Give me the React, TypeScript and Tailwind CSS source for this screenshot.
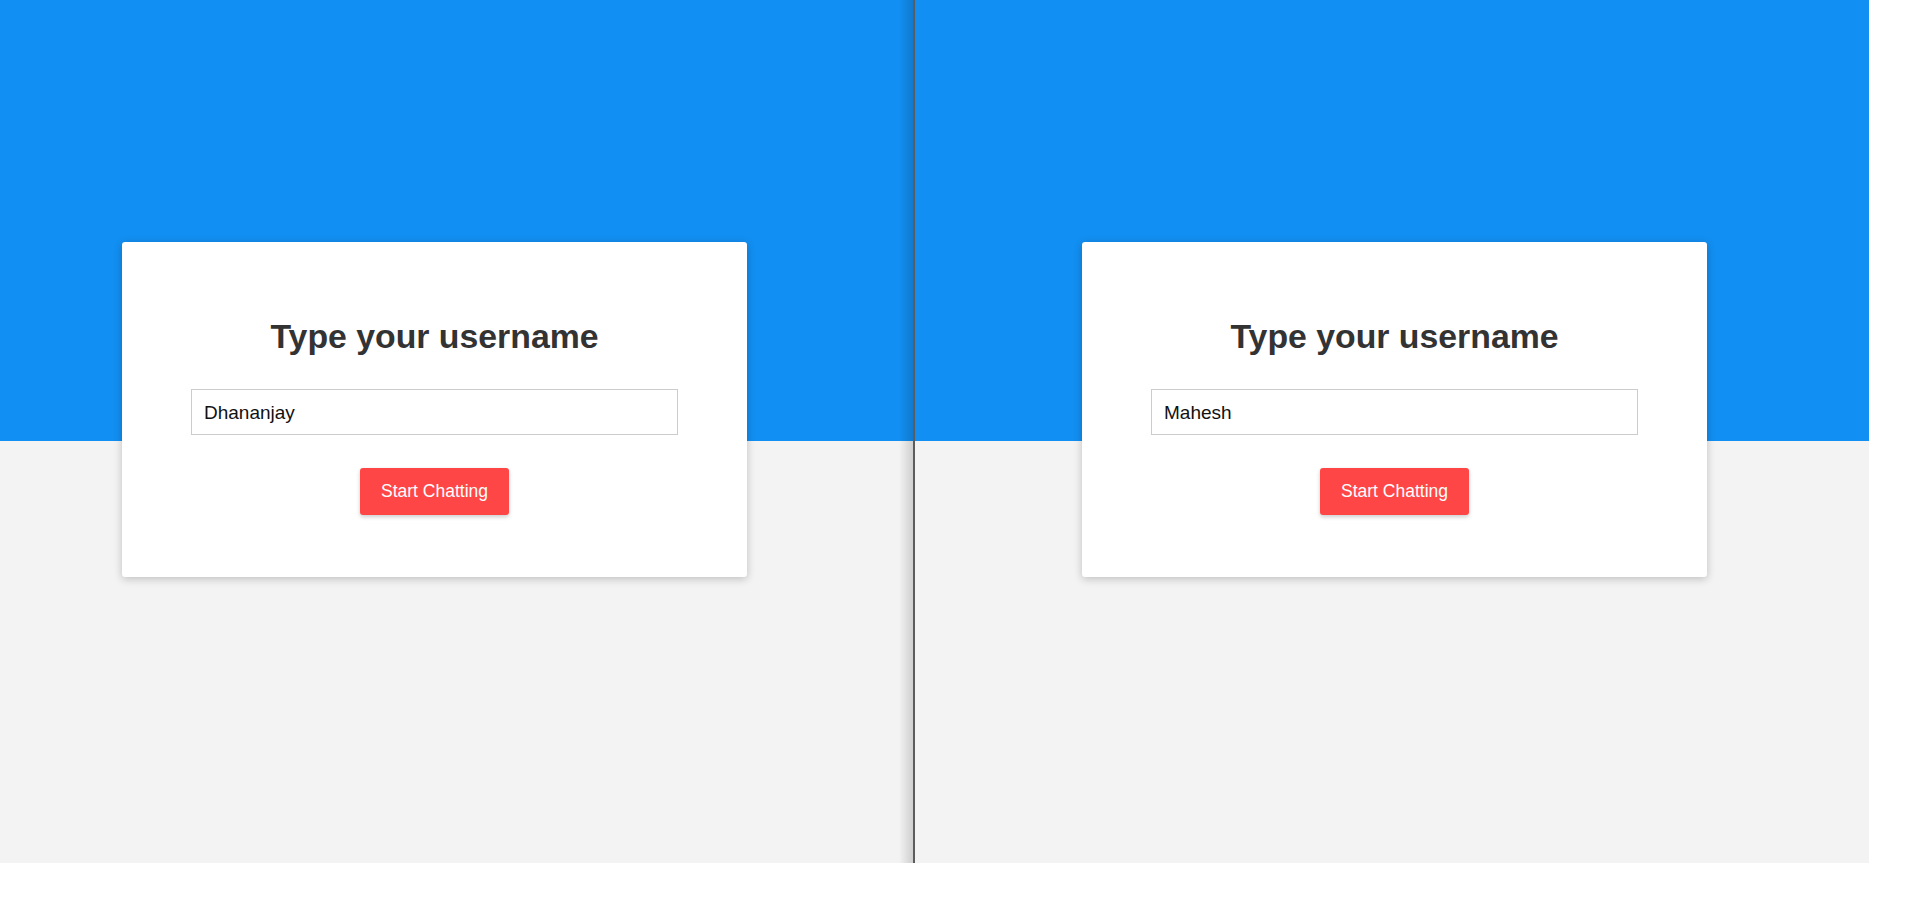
import React from "react";

function LoginCard({ name }: { name: string }) {
  return (
    <div className="w-[625px] rounded-[3px] bg-white pt-[74px] pb-[62px] shadow-[0_2px_8px_rgba(0,0,0,0.22)] flex flex-col items-center">
      <h2 className="text-[33.8px] leading-[40px] font-bold text-[#333333]">Type your username</h2>
      <input
        readOnly
        value={name}
        className="mt-[33px] w-[487px] h-[46px] border border-[#cccccc] bg-white px-3 pt-[2px] text-[19px] text-[#111111] outline-none"
      />
      <button className="mt-[33px] w-[149px] h-[47px] rounded-[3px] bg-[#ff4646] text-white text-[17.5px] shadow-[0_2px_4px_rgba(0,0,0,0.2)]">
        Start Chatting
      </button>
    </div>
  );
}

export default function App() {
  return (
    <div
      className="w-[1914px] h-[903px] bg-white flex items-start"
      style={{ fontFamily: '"Liberation Sans", Arial, sans-serif' }}
    >
      <div className="relative w-[913px] h-[863px] bg-[linear-gradient(to_bottom,#128ff2_441px,#f3f3f3_441px)] pt-[242px] pl-[122px]">
        <LoginCard name="Dhananjay" />
        <div className="absolute right-0 top-0 h-full w-[14px] bg-gradient-to-r from-transparent to-black/15" />
      </div>
      <div className="w-[2px] h-[863px] bg-[#5c5c5c]" />
      <div className="w-[954px] h-[863px] bg-[linear-gradient(to_bottom,#128ff2_441px,#f3f3f3_441px)] pt-[242px] pl-[167px]">
        <LoginCard name="Mahesh" />
      </div>
    </div>
  );
}
